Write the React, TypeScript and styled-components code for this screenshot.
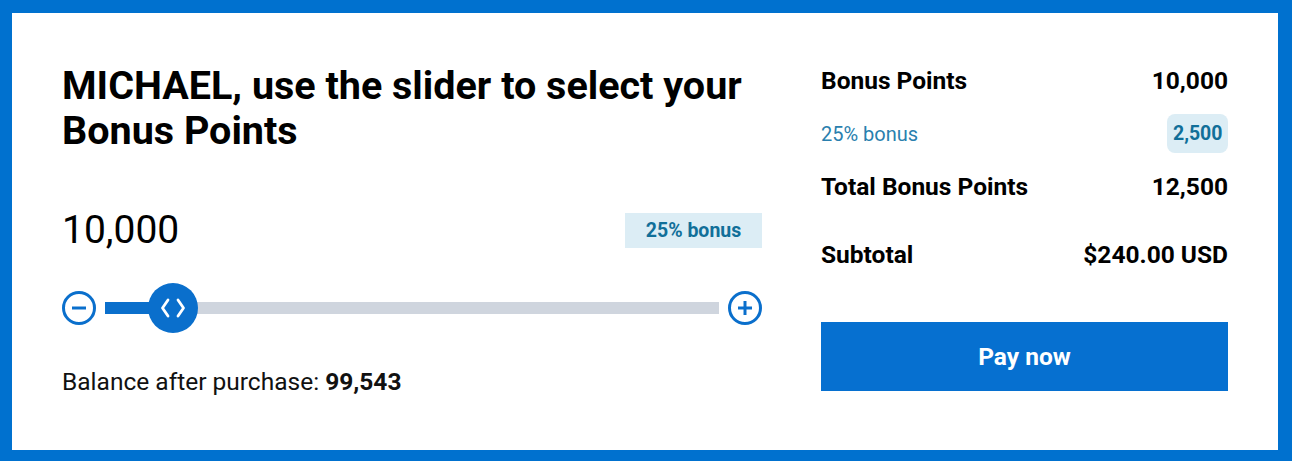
import styled, { createGlobalStyle } from "styled-components";

const GlobalStyle = createGlobalStyle`
  html, body {
    margin: 0;
    padding: 0;
    background: #0071cf;
    font-family: Roboto, "Liberation Sans", Arial, sans-serif;
    color: #111;
  }
`;

const MIN = 5000;
const MAX = 50000;

const data = {
  name: "MICHAEL",
  points: 10000,
  bonusRate: 25,
  balance: 99543,
  price: "$240.00 USD",
};

const fmt = (n: number) => n.toLocaleString("en-US");

function CircleIcon({ plus }: { plus?: boolean }) {
  return (
    <svg width="34" height="34" viewBox="0 0 34 34" fill="none">
      <circle cx="17" cy="17" r="15.5" stroke="#0a6fcc" strokeWidth="3" />
      <line x1="10" y1="17" x2="24" y2="17" stroke="#0a6fcc" strokeWidth="3" />
      {plus && (
        <line x1="17" y1="10" x2="17" y2="24" stroke="#0a6fcc" strokeWidth="3" />
      )}
    </svg>
  );
}

export default function App() {
  const bonus = (data.points * data.bonusRate) / 100;
  const pct = ((data.points - MIN) / (MAX - MIN)) * 100;

  return (
    <>
      <GlobalStyle />
      <Panel>
        <LeftCol>
          <Heading>
            {data.name}, use the slider to select your Bonus Points
          </Heading>
          <AmountRow>
            <Amount>{fmt(data.points)}</Amount>
            <BonusTag>{data.bonusRate}% bonus</BonusTag>
          </AmountRow>
          <SliderRow>
            <StepButton aria-label="decrease">
              <CircleIcon />
            </StepButton>
            <Track>
              <Fill style={{ width: `${pct}%` }} />
              <Thumb style={{ left: `${pct}%` }}>
                <svg width="26" height="20" viewBox="0 0 26 20" fill="none">
                  <polyline
                    points="8,2 2.5,10 8,18"
                    stroke="#fff"
                    strokeWidth="2.8"
                    strokeLinecap="round"
                    strokeLinejoin="round"
                  />
                  <polyline
                    points="18,2 23.5,10 18,18"
                    stroke="#fff"
                    strokeWidth="2.8"
                    strokeLinecap="round"
                    strokeLinejoin="round"
                  />
                </svg>
              </Thumb>
            </Track>
            <StepButton aria-label="increase">
              <CircleIcon plus />
            </StepButton>
          </SliderRow>
          <Balance>
            Balance after purchase: <b>{fmt(data.balance)}</b>
          </Balance>
        </LeftCol>

        <RightCol>
          <SummaryRow $top={6}>
            <span>Bonus Points</span>
            <span>{fmt(data.points)}</span>
          </SummaryRow>
          <SummaryRow $top={18} $sub>
            <span>{data.bonusRate}% bonus</span>
            <Pill>{fmt(bonus)}</Pill>
          </SummaryRow>
          <SummaryRow $top={19}>
            <span>Total Bonus Points</span>
            <span>{fmt(data.points + bonus)}</span>
          </SummaryRow>
          <SummaryRow $top={38}>
            <span>Subtotal</span>
            <span>{data.price}</span>
          </SummaryRow>
          <PayButton>Pay now</PayButton>
        </RightCol>
      </Panel>
    </>
  );
}

const Panel = styled.div`
  margin: 13px 14px 0 12px;
  height: 437px;
  box-sizing: border-box;
  background: #fff;
  padding: 47px 50px 0 50px;
  display: grid;
  grid-template-columns: 700px 407px;
  column-gap: 59px;
`;

const LeftCol = styled.div`
  display: flex;
  flex-direction: column;
`;

const Heading = styled.h1`
  margin: 3px 0 0;
  font-size: 39.5px;
  line-height: 45px;
  font-weight: 700;
  color: #000;
  max-width: 700px;
`;

const AmountRow = styled.div`
  margin-top: 55px;
  height: 44px;
  display: flex;
  align-items: center;
  justify-content: space-between;
`;

const Amount = styled.div`
  font-size: 39px;
  line-height: 44px;
  color: #000;
`;

const BonusTag = styled.div`
  background: #dcedf5;
  color: #116f99;
  font-weight: 700;
  font-size: 19.5px;
  line-height: 35px;
  width: 137px;
  text-align: center;
`;

const SliderRow = styled.div`
  margin-top: 31px;
  height: 50px;
  display: flex;
  align-items: center;
  gap: 9px;
`;

const StepButton = styled.button`
  border: 0;
  background: none;
  padding: 0;
  width: 34px;
  height: 34px;
  display: flex;
  cursor: pointer;
`;

const Track = styled.div`
  position: relative;
  flex: 1;
  height: 12px;
  background: #cfd5de;
`;

const Fill = styled.div`
  height: 100%;
  background: #0a6fcc;
`;

const Thumb = styled.div`
  position: absolute;
  top: 50%;
  width: 50px;
  height: 50px;
  border-radius: 50%;
  background: #0a6fcc;
  transform: translate(-50%, -50%);
  display: flex;
  align-items: center;
  justify-content: center;
`;

const Balance = styled.div`
  margin-top: 35px;
  font-size: 24.5px;
  line-height: 28px;
  color: #111;

  b {
    font-weight: 700;
  }
`;

const RightCol = styled.div`
  display: flex;
  flex-direction: column;
`;

const SummaryRow = styled.div<{ $top: number; $sub?: boolean }>`
  margin-top: ${({ $top }) => $top}px;
  min-height: 30px;
  display: flex;
  align-items: center;
  justify-content: space-between;
  font-size: ${({ $sub }) => ($sub ? "20px" : "24.5px")};
  line-height: 30px;
  font-weight: ${({ $sub }) => ($sub ? 400 : 700)};
  color: ${({ $sub }) => ($sub ? "#2a7fae" : "#000")};
`;

const Pill = styled.span`
  background: #dcedf5;
  color: #116f99;
  font-weight: 700;
  font-size: 19.5px;
  line-height: 39px;
  padding: 0 5.5px;
  border-radius: 8px;
`;

const PayButton = styled.button`
  margin-top: 52px;
  height: 69px;
  border: 0;
  background: #0670d0;
  color: #fff;
  font-family: inherit;
  font-size: 24.5px;
  font-weight: 700;
  cursor: pointer;
`;
